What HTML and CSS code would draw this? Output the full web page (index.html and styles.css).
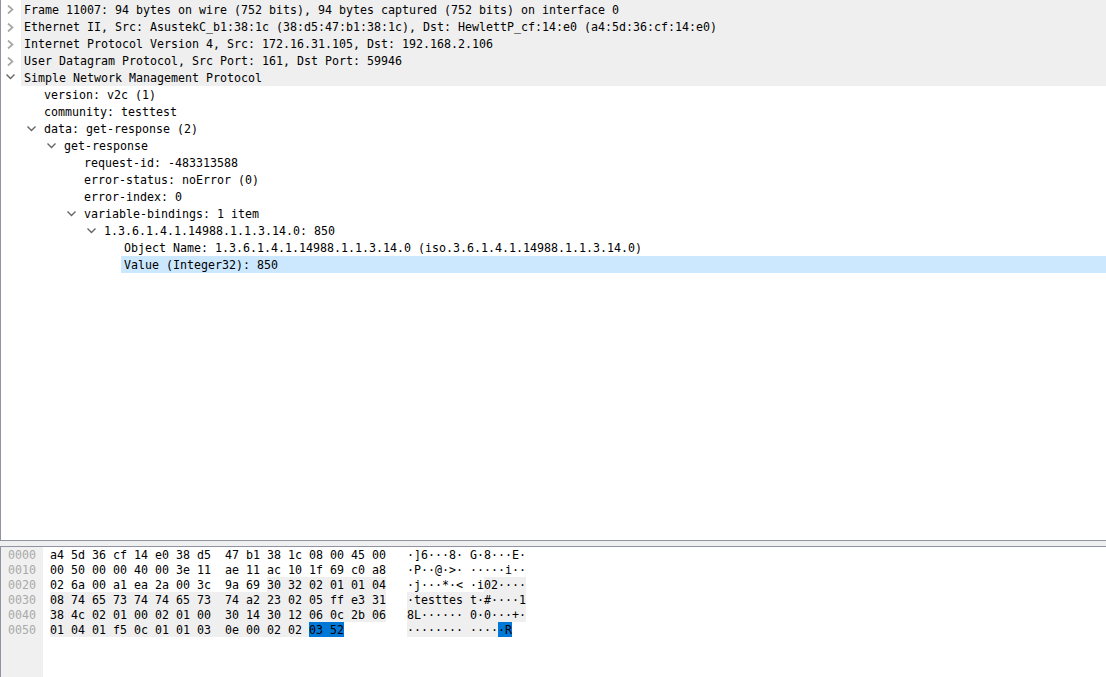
FILE: index.html
```html
<!DOCTYPE html>
<html lang="en">
<head>
<meta charset="utf-8">
<title>Packet details</title>
<link rel="stylesheet" href="styles.css">
</head>
<body>
<section class="tree">
  <div class="row head"><svg class="tw" viewBox="0 0 9 9"><path d="M2 .5 6.5 4.5 2 8.5"/></svg><span>Frame 11007: 94 bytes on wire (752 bits), 94 bytes captured (752 bits) on interface 0</span></div>
  <div class="row head"><svg class="tw" viewBox="0 0 9 9"><path d="M2 .5 6.5 4.5 2 8.5"/></svg><span>Ethernet II, Src: AsustekC_b1:38:1c (38:d5:47:b1:38:1c), Dst: HewlettP_cf:14:e0 (a4:5d:36:cf:14:e0)</span></div>
  <div class="row head"><svg class="tw" viewBox="0 0 9 9"><path d="M2 .5 6.5 4.5 2 8.5"/></svg><span>Internet Protocol Version 4, Src: 172.16.31.105, Dst: 192.168.2.106</span></div>
  <div class="row head"><svg class="tw" viewBox="0 0 9 9"><path d="M2 .5 6.5 4.5 2 8.5"/></svg><span>User Datagram Protocol, Src Port: 161, Dst Port: 59946</span></div>
  <div class="row head"><svg class="tw open" viewBox="0 0 9 9"><path d="M.5 2.5 4.5 6.5 8.5 2.5"/></svg><span>Simple Network Management Protocol</span></div>
  <div class="row l1"><span>version: v2c (1)</span></div>
  <div class="row l1"><span>community: testtest</span></div>
  <div class="row l1"><svg class="tw open" viewBox="0 0 9 9"><path d="M.5 2.5 4.5 6.5 8.5 2.5"/></svg><span>data: get-response (2)</span></div>
  <div class="row l2"><svg class="tw open" viewBox="0 0 9 9"><path d="M.5 2.5 4.5 6.5 8.5 2.5"/></svg><span>get-response</span></div>
  <div class="row l3"><span>request-id: -483313588</span></div>
  <div class="row l3"><span>error-status: noError (0)</span></div>
  <div class="row l3"><span>error-index: 0</span></div>
  <div class="row l3"><svg class="tw open" viewBox="0 0 9 9"><path d="M.5 2.5 4.5 6.5 8.5 2.5"/></svg><span>variable-bindings: 1 item</span></div>
  <div class="row l4"><svg class="tw open" viewBox="0 0 9 9"><path d="M.5 2.5 4.5 6.5 8.5 2.5"/></svg><span>1.3.6.1.4.1.14988.1.1.3.14.0: 850</span></div>
  <div class="row l5"><span>Object Name: 1.3.6.1.4.1.14988.1.1.3.14.0 (iso.3.6.1.4.1.14988.1.1.3.14.0)</span></div>
  <div class="row l5 sel"><span>Value (Integer32): 850</span></div>
</section>
<section class="hex">
  <div class="offsets">
    <div class="line">0000</div><div class="line">0010</div><div class="line">0020</div><div class="line">0030</div><div class="line">0040</div><div class="line">0050</div>
  </div>
  <div class="dump">
    <div class="line"><span class="b">a4 5d 36 cf 14 e0 38 d5  47 b1 38 1c 08 00 45 00</span><span class="a">·]6···8· G·8···E·</span></div>
    <div class="line"><span class="b">00 50 00 00 40 00 3e 11  ae 11 ac 10 1f 69 c0 a8</span><span class="a">·P··@·&gt;· ·····i··</span></div>
    <div class="line"><span class="b">02 6a 00 a1 ea 2a 00 3c  9a 69 <i>30 32 02 01 01 04</i></span><span class="a">·j···*·&lt; ·i<i>02····</i></span></div>
    <div class="line"><span class="b"><i>08 74 65 73 74 74 65 73  74 a2 23 02 05 ff e3 31</i></span><span class="a"><i>·testtes t·#····1</i></span></div>
    <div class="line"><span class="b"><i>38 4c 02 01 00 02 01 00  30 14 30 12 06 0c 2b 06</i></span><span class="a"><i>8L······ 0·0···+·</i></span></div>
    <div class="line"><span class="b"><i>01 04 01 f5 0c 01 01 03  0e 00 02 02 </i><b>03 52</b></span><span class="a"><i>········ ····</i><b>·R</b></span></div>
  </div>
</section>
</body>
</html>
```
FILE: styles.css
```css
* { box-sizing: border-box; }
html, body { margin: 0; height: 100%; }
body {
  width: 1106px; height: 677px; overflow: hidden; background: #f0f0f0;
  font: 11.63px/19px "DejaVu Sans Mono", monospace; color: #000;
  display: flex; flex-direction: column; gap: 5px;
}
.tree {
  height: 541px; background: #fff;
  border-left: 1px solid #8f93a2; border-bottom: 1px solid #8f93a2;
}
.row { height: 17px; position: relative; white-space: pre; }
.row:first-child { height: 18px; padding-top: 1px; }
.head { margin-left: 20px; padding-left: 3px; background: #efefef; }
.tw { position: absolute; width: 9px; height: 9px; top: 5px; left: -15px; fill: none; stroke: #a6a6a6; stroke-width: 1.7; }
.tw.open { top: 4px; left: 6px; stroke: #666; stroke-width: 1.4; }
.head .tw.open { top: 3px; left: -15px; }
.l1, .l2, .l3, .l4 { padding-left: 23px; }
.l1 { margin-left: 20px; }
.l2 { margin-left: 40px; }
.l3 { margin-left: 60px; }
.l4 { margin-left: 80px; }
.l5 { margin-left: 120px; padding-left: 3px; }
.sel { background: #cce8ff; }
.hex {
  flex: 1; display: flex; background: #fff; line-height: 17px;
  border-top: 1px solid #8f93a2; border-left: 1px solid #8f93a2;
}
.offsets { width: 42px; background: #f0f0f0; color: #aaa; padding-left: 7px; }
.dump { padding-left: 7px; }
.line { display: flex; height: 15px; white-space: pre; }
.b { width: 357px; }
.a { display: block; }
i, b { display: inline-block; height: 15px; font-style: normal; font-weight: normal; }
i { background: #efefef; }
b { background: #0078d7; }
```
